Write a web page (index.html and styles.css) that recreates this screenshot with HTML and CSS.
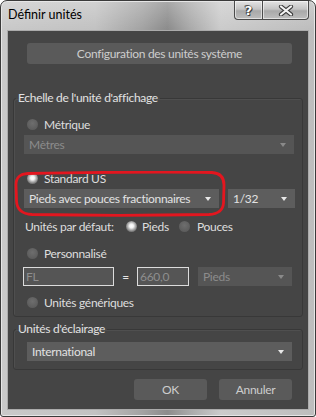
FILE: index.html
```html
<!DOCTYPE html>
<html lang="fr">
<head>
    <meta charset="UTF-8">
    <title>Définir unités</title>
    <link rel="stylesheet" href="styles.css">
</head>
<body>
    <div class="window">
        <div class="titlebar">
            <span class="title">Définir unités</span>
            <div class="caption-btns">
                <span class="cap-btn help">?</span>
                <span class="cap-btn close">
                    <svg width="16" height="11" viewBox="0 0 16 11">
                        <path d="M3 1.5 L13 9.5 M13 1.5 L3 9.5" stroke="#3a3a3a" stroke-width="4.2" stroke-linecap="round"/>
                        <path d="M3 1.5 L13 9.5 M13 1.5 L3 9.5" stroke="#f4f4f4" stroke-width="2.2" stroke-linecap="round"/>
                    </svg>
                </span>
            </div>
        </div>

        <div class="client">
            <div class="btn wide">Configuration des unités système</div>

            <fieldset class="group scale">
                <legend>Echelle de l'unité d'affichage</legend>

                <div class="option metric">
                    <span class="radio"></span>
                    <span>Métrique</span>
                </div>
                <div class="select off metres">Mètres</div>

                <div class="option us">
                    <span class="radio on"></span>
                    <span>Standard US</span>
                </div>
                <div class="select-row">
                    <div class="select pieds">Pieds avec pouces fractionnaires</div>
                    <div class="select frac">1/32</div>
                </div>

                <div class="default-row">
                    <span class="default-label">Unités par défaut:</span>
                    <span class="radio on r-pieds"></span>
                    <span class="l-pieds">Pieds</span>
                    <span class="radio r-pouces"></span>
                    <span class="l-pouces">Pouces</span>
                </div>

                <div class="option custom">
                    <span class="radio"></span>
                    <span>Personnalisé</span>
                </div>
                <div class="custom-row">
                    <div class="field fl">FL</div>
                    <span class="equals">=</span>
                    <div class="field value">660,0</div>
                    <div class="select off unit">Pieds</div>
                </div>

                <div class="option generic">
                    <span class="radio"></span>
                    <span>Unités génériques</span>
                </div>
            </fieldset>

            <fieldset class="group light">
                <legend>Unités d'éclairage</legend>
                <div class="select intl">International</div>
            </fieldset>

            <div class="actions">
                <div class="btn">OK</div>
                <div class="btn">Annuler</div>
            </div>
        </div>

        <!-- red hand-drawn markup over the Standard US block -->
        <svg class="markup" width="214" height="46" viewBox="0 0 214 46">
            <path d="M14 2.5 C70 1.5 150 0.5 198 1.5 C206 2 210 6 210 14 L209.5 32 C209 40 204 43 195 43.5 C140 44.5 70 44.5 18 43.5 C8 43 3 39 2.5 30 L2 14 C2 6 6 3 14 2.5 Z"
                  fill="none" stroke="#e3161f" stroke-width="2.8"/>
        </svg>
    </div>
</body>
</html>
```

FILE: styles.css
```css
*{
    margin: 0;
    padding: 0;
    box-sizing: border-box;
}

body{
    background: #fff;
    font-family: Lato, "Open Sans", sans-serif;
    font-size: 12px;
}

.window{
    position: relative;
    width: 316px;
    height: 417px;
    border: 1px solid #3a3a3a;
    border-radius: 7px 7px 3px 3px;
    padding: 0 6px 6px 6px;
    display: flex;
    flex-direction: column;
    background:
        linear-gradient(180deg, rgba(255,255,255,0.25) 0px, rgba(255,255,255,0) 28px),
        linear-gradient(90deg, #c9c9c9 0%, #c2c2c2 30%, #a3a3a3 45%, #8c8c8c 53%, #a9a9a9 60%, #cbcbcb 70%, #c4c4c4 85%, #bdbdbd 100%);
    box-shadow: inset 0 0 0 1px #e6e6e6;
}

.titlebar{
    height: 29px;
    display: flex;
    align-items: flex-start;
    justify-content: space-between;
}

.title{
    margin: 6px 0 0 1px;
    color: #000;
    font-size: 12.5px;
}

.caption-btns{
    display: flex;
    margin-right: 0;
}

.cap-btn{
    height: 19px;
    display: flex;
    align-items: center;
    justify-content: center;
    border: 1px solid #4a4a4a;
    border-top: none;
    background: linear-gradient(180deg, #e4e4e4 0%, #c4c4c4 45%, #a9a9a9 55%, #bdbdbd 100%);
    box-shadow: inset 0 0 0 1px rgba(255,255,255,0.55);
}

.help{
    width: 28px;
    border-radius: 0 0 0 4px;
    border-right: none;
    color: #fff;
    font-family: "DejaVu Sans", sans-serif;
    font-weight: bold;
    font-size: 13px;
    text-shadow: 0 0 1px #333, 0 0 1px #333, 1px 1px 0 #444, -1px -1px 0 #555;
}

.close{
    width: 47px;
    border-radius: 0 0 4px 0;
}

.client{
    flex: 1;
    border: 1px solid #ababab;
    background: #454545;
    color: #dedede;
    letter-spacing: -0.3px;
    display: flex;
    flex-direction: column;
}

.btn{
    height: 21px;
    background: #5a5a5a;
    border-radius: 3px;
    color: #cdcdcd;
    display: flex;
    align-items: center;
    justify-content: center;
}

.btn.wide{
    width: 265px;
    margin: 12px 0 0 19px;
}

.group{
    width: 290px;
    margin-left: 5px;
    border: 1px solid #383838;
    border-radius: 3px;
    box-shadow: inset 1px 1px 0 #4f4f4f;
}

.group legend{
    margin-left: 2px;
    padding: 0 2px;
    line-height: 16px;
    color: #e2e2e2;
}

.scale{
    margin-top: 26px;
    padding-bottom: 6px;
}

.light{
    margin-top: 4px;
    padding-bottom: 8px;
}

.option{
    display: flex;
    align-items: center;
    height: 16px;
    margin-left: 13px;
    gap: 6px;
}

.radio{
    flex: none;
    width: 11px;
    height: 11px;
    border-radius: 50%;
    background: radial-gradient(circle at 50% 40%, #6e6e6e 0, #5d5d5d 70%, #565656 100%);
}

.radio.on{
    background: radial-gradient(circle at 50% 45%, #ffffff 0, #f2f2f2 2px, #bdbdbd 3.5px, #7c7c7c 5.5px, #666 100%);
}

.metric{
    margin-top: 10px;
}

.select{
    height: 19px;
    background: #5d5d5d;
    color: #e2e2e2;
    display: flex;
    align-items: center;
    justify-content: space-between;
    padding: 0 8px 0 5px;
}

.select::after{
    content: "";
    border-left: 3.5px solid transparent;
    border-right: 3.5px solid transparent;
    border-top: 4px solid #e8e8e8;
}

.select.off{
    background: #555;
    color: #8c8c8c;
}

.select.off::after{
    border-top-color: #8a8a8a;
}

.metres{
    width: 270px;
    margin: 3px 0 0 10px;
}

.us{
    margin-top: 16px;
}

.select-row{
    display: flex;
    gap: 9px;
    margin: 3px 0 0 10px;
}

.pieds{
    width: 195px;
}

.frac{
    width: 67px;
}

.default-row{
    display: flex;
    align-items: center;
    height: 16px;
    margin: 10px 0 0 11px;
}

.default-label{
    width: 101px;
}

.l-pieds{
    margin: 0 0 0 5px;
    width: 37px;
}

.l-pouces{
    margin-left: 7px;
}

.custom{
    margin-top: 11px;
}

.custom-row{
    display: flex;
    align-items: center;
    margin: 6px 0 0 9px;
}

.field{
    height: 19px;
    border: 1px solid #dcdcdc;
    background: #555;
    color: #8e8e8e;
    padding-left: 2px;
    display: flex;
    align-items: center;
}

.fl{
    width: 91px;
}

.equals{
    width: 23px;
    text-align: center;
    color: #e6e6e6;
}

.value{
    width: 52px;
}

.unit{
    width: 94px;
    margin-left: 9px;
    background: #505050;
    color: #7c7c7c;
}

.generic{
    margin-top: 8px;
}

.intl{
    width: 265px;
    margin: 5px 0 0 13px;
}

.actions{
    display: flex;
    justify-content: flex-end;
    gap: 12px;
    margin: 9px 16px 0 0;
}

.actions .btn{
    width: 73px;
}

.markup{
    position: absolute;
    left: 13px;
    top: 170px;
}
```
